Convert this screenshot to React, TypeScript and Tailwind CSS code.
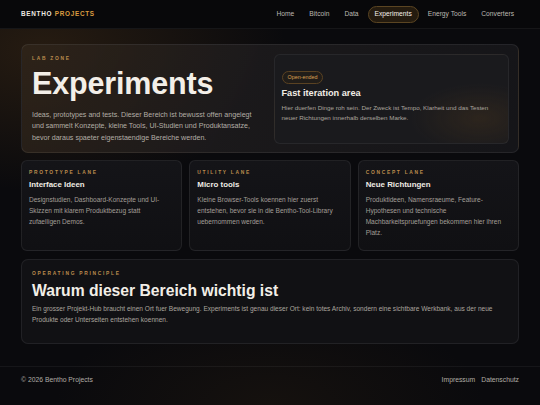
const navItems = ["Home", "Bitcoin", "Data", "Experiments", "Energy Tools", "Converters"];

const lanes = [
  {
    label: "PROTOTYPE LANE",
    title: "Interface Ideen",
    text: "Designstudien, Dashboard-Konzepte und UI-Skizzen mit klarem Produktbezug statt zufaelligen Demos.",
  },
  {
    label: "UTILITY LANE",
    title: "Micro tools",
    text: "Kleine Browser-Tools koennen hier zuerst entstehen, bevor sie in die Bentho-Tool-Library uebernommen werden.",
  },
  {
    label: "CONCEPT LANE",
    title: "Neue Richtungen",
    text: "Produktideen, Namensraeume, Feature-Hypothesen und technische Machbarkeitspruefungen bekommen hier ihren Platz.",
  },
];

function Label({ children }: { children: string }) {
  return (
    <div className="text-[4.9px] leading-[6px] font-bold tracking-[0.35em] text-[#bb8c4e]">
      {children}
    </div>
  );
}

export default function App() {
  return (
    <div
      className="min-h-[405px] w-full bg-[#0a0a0d] bg-[radial-gradient(ellipse_45%_35%_at_8%_12%,rgba(110,72,28,0.28),transparent),radial-gradient(ellipse_40%_25%_at_50%_100%,rgba(90,60,22,0.14),transparent)] text-[#e9e5de]"
      style={{ fontFamily: '"Liberation Sans", Arial, sans-serif' }}
    >
      {/* header */}
      <header className="h-[29px] flex items-center justify-between px-[21px] bg-[#08080a] border-b border-white/[0.06]">
        <div className="text-[6.4px] font-bold tracking-[0.11em]">
          <span className="text-[#ece8e1]">BENTHO</span>{" "}
          <span className="text-[#dc9c40]">PROJECTS</span>
        </div>
        <nav className="flex items-center gap-[3px] -mr-[1px]">
          {navItems.map((item) =>
            item === "Experiments" ? (
              <span
                key={item}
                className="h-[17px] px-[6px] flex items-center rounded-full border border-[#5b4522] bg-[#241b0f] text-[6.7px] text-[#f4f0ea]"
              >
                {item}
              </span>
            ) : (
              <span key={item} className="h-[17px] px-[6px] flex items-center text-[6.7px] text-[#bdb9b2]">
                {item}
              </span>
            )
          )}
        </nav>
      </header>

      <main className="px-[21px] pt-[15px] flex flex-col gap-[7px]">
        {/* hero */}
        <section className="h-[109px] rounded-[7px] border border-white/[0.07] bg-[linear-gradient(115deg,rgba(48,37,26,0.8),rgba(30,28,30,0.85)_45%,rgba(22,22,26,0.9))] p-[9px] grid grid-cols-2 gap-[7px]">
          <div className="pl-[1px] pt-[2px]">
            <Label>LAB ZONE</Label>
            <h1 className="mt-[6px] text-[30.5px] leading-[30px] font-bold tracking-[-0.005em] text-[#f3efe8]">
              Experiments
            </h1>
            <p className="mt-[12px] text-[7.1px] leading-[11.4px] text-[#b3aea6] whitespace-nowrap">
              Ideas, prototypes and tests. Dieser Bereich ist bewusst offen angelegt
              <br />
              und sammelt Konzepte, kleine Tools, UI-Studien und Produktansatze,
              <br />
              bevor daraus spaeter eigenstaendige Bereiche werden.
            </p>
          </div>
          <div className="rounded-[6px] border border-white/[0.06] bg-[#1a1a1d] bg-[radial-gradient(ellipse_30%_40%_at_88%_72%,rgba(110,74,30,0.22),transparent)] px-[7px] pt-[7px]">
            <span className="inline-flex h-[13px] items-center rounded-full border border-[#5a4222] bg-[#33261450] px-[5px] text-[5.4px] text-[#d9a052]">
              Open-ended
            </span>
            <h2 className="mt-[2px] text-[9.2px] leading-[11px] font-bold text-[#f1ede6]">Fast iteration area</h2>
            <p className="mt-[4px] text-[6.25px] leading-[10px] text-[#aaa59e]">
              Hier duerfen Dinge roh sein. Der Zweck ist Tempo, Klarheit und das Testen neuer Richtungen innerhalb derselben Marke.
            </p>
          </div>
        </section>

        {/* lanes */}
        <section className="grid grid-cols-3 gap-[7px]">
          {lanes.map((lane) => (
            <div
              key={lane.label}
              className="h-[91px] rounded-[6px] border border-white/[0.07] bg-[linear-gradient(180deg,#141418,#101013)] pl-[7px] pr-[10px] pt-[9px]"
            >
              <Label>{lane.label}</Label>
              <h3 className="mt-[4px] text-[7.9px] leading-[10px] font-bold text-[#efebe4]">{lane.title}</h3>
              <p className="mt-[4px] text-[6.55px] leading-[11px] text-[#a29e97]">{lane.text}</p>
            </div>
          ))}
        </section>

        {/* principle */}
        <section className="mt-[0.5px] h-[85px] rounded-[7px] border border-white/[0.07] bg-[#121215]/90 px-[10px] pt-[11px]">
          <Label>OPERATING PRINCIPLE</Label>
          <h2 className="mt-[4px] text-[15.7px] leading-[19px] font-bold text-[#f2eee7]">
            Warum dieser Bereich wichtig ist
          </h2>
          <p className="mt-[3px] text-[6.55px] leading-[11.5px] text-[#aaa59e]">
            Ein grosser Projekt-Hub braucht einen Ort fuer Bewegung. Experiments ist genau dieser Ort: kein totes Archiv, sondern eine sichtbare Werkbank, aus der neue Produkte oder Unterseiten entstehen koennen.
          </p>
        </section>
      </main>

      {/* footer */}
      <footer className="mt-[22px] border-t border-white/[0.05] h-[40px] px-[21px] pt-[8px] flex justify-between text-[6.8px] text-[#b0aca5]">
        <span>© 2026 Bentho Projects</span>
        <div className="flex gap-[6px]">
          <span>Impressum</span>
          <span>Datenschutz</span>
        </div>
      </footer>
    </div>
  );
}
